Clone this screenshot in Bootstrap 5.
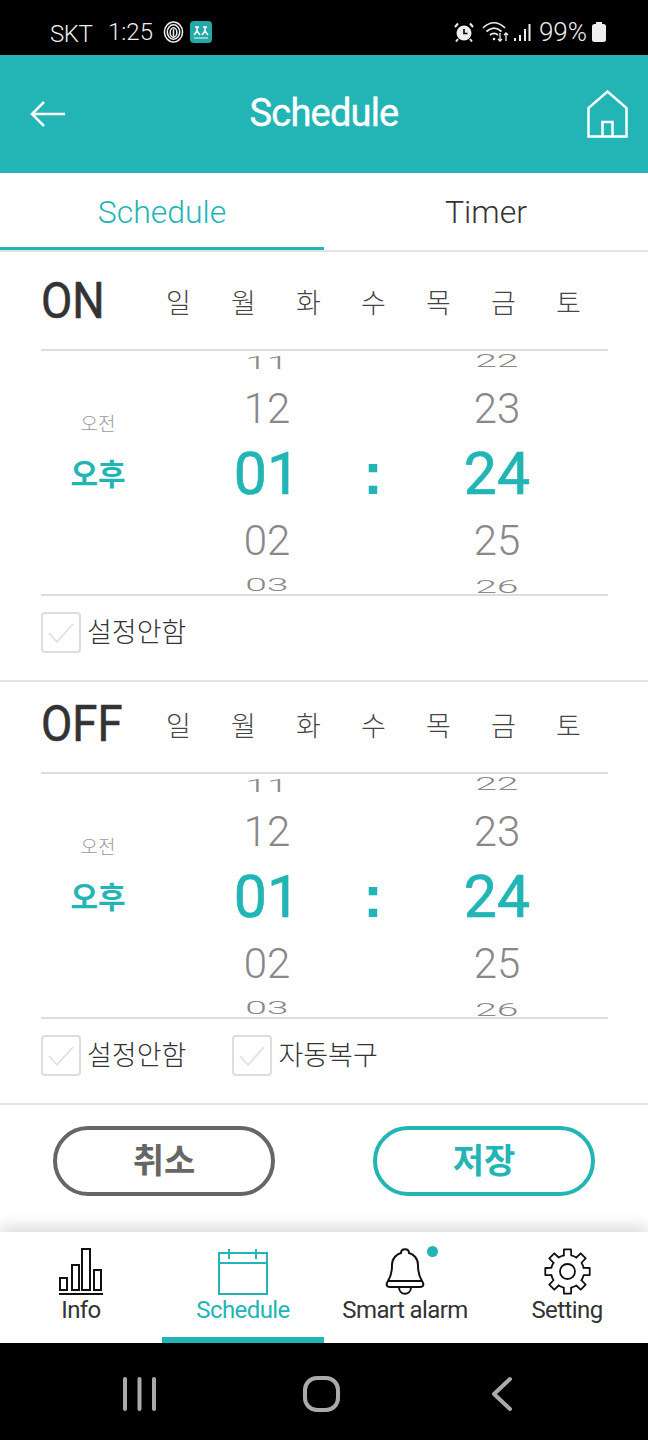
<!DOCTYPE html>
<html lang="ko"><head><meta charset="utf-8"><title>Schedule</title>
<link href="https://cdn.jsdelivr.net/npm/bootstrap@5.3.0/dist/css/bootstrap.min.css" rel="stylesheet">
<style>
html,body{height:1440px;overflow:hidden}
body{width:648px;font-family:Roboto,"Noto Sans CJK KR",sans-serif;color:#333;background:#fff}
.kr{font-family:"Noto Sans CJK KR",sans-serif}
.sbar{height:55px;background:#000;color:#eee;padding:8px 42px 0 50px}
.sbar-txt{font-size:24px;font-weight:300;line-height:1}
.skt{margin-top:4px;margin-right:16px;width:42px;letter-spacing:-.5px}
.clock{margin-right:11px;width:44px;letter-spacing:0}
.pct{font-size:26px;margin-left:8px;margin-right:5px}
.app-ic{margin-left:6px}
.app-head{height:118px;background:#23b5b5;color:#fff;padding:0 20px 0 30px}
.app-title{font-size:38px;font-weight:400;letter-spacing:-.8px;line-height:1;margin-right:5px;margin-top:-2px;-webkit-text-stroke:.4px #fff}
.tabbar{height:79px;border-bottom:2px solid #e2e2e2}
.tab-item{width:324px;height:77px;font-size:32px;font-weight:300;line-height:78px;text-align:center;color:#333}
.tab-on{color:#23b5b5;border-bottom:3px solid #23b5b5}
.sched-sec{padding:0 40px 0 41px}
.sec-on{padding-top:8px;height:430px}
.sec-off{padding-top:1px;height:423px}
.sec-rule{border-bottom:2px solid #e2e2e2}
.head-row{height:91px;padding-bottom:7px;border-bottom:2px solid #ddd}
.onoff{font-size:50px;font-weight:400;line-height:1;width:96px;margin-top:-1px;transform:scaleX(.91);transform-origin:left center;color:#333;-webkit-text-stroke:.6px #333}
.days{width:455px;margin-right:7px}
.day-i{width:65px;text-align:center;font-size:27px;font-weight:300;color:#444;line-height:1}
.picker{height:245px;border-bottom:2px solid #ddd}
.col-ap{width:114px;flex:none}
.col-h{width:212px;margin-left:6px;flex:none}
.col-c{width:0;flex:none}
.col-m{width:248px;flex:none}
.cell{display:flex;align-items:center;justify-content:center;color:#888;line-height:1}
.c1{height:25px;padding-bottom:3px}
.col-m .c1{padding-bottom:7px}
.c2{height:66px;font-size:42px;font-weight:300}
.c3{height:62px;font-size:59px;font-weight:400;color:#23b5b5;-webkit-text-stroke:.7px #23b5b5}
.c4{height:74px;font-size:42px;font-weight:300}
.c5{height:11px}
.col-m .c5{padding-top:4px}
.squash{display:inline-block;font-weight:300;font-size:34px;line-height:20px;transform:scaleY(.55) scaleX(1.15)}
.ap1{height:46px;font-size:19px;color:#999;font-weight:300}
.ap2{height:50px;font-size:30px;font-weight:700;color:#23b5b5;margin-top:2px}
.colon{width:20px;margin:0 -10px -2px;font-family:"Liberation Sans",sans-serif;font-size:60px;font-weight:700;color:#23b5b5;line-height:1;text-align:center}
.chk-row{height:41px;margin-top:16px}
.chk-box{width:40px;height:41px;border:2px solid #ddd;border-radius:4px;flex:none}
.chk-lbl{font-size:27px;font-weight:300;margin-left:6px;line-height:1;margin-bottom:5px;color:#333}
.chk-gap{margin-left:46px}
.btn-wrap{padding:21px 53px 0;height:127px}
.pill{width:222px;height:70px;border-radius:35px;font-size:34px;font-weight:700;line-height:1;background:#fff;padding:0 0 4px}
.pill-gray{border:4px solid #666;color:#666}
.pill-teal{border:4px solid #23b5b5;color:#23b5b5}
.botnav{height:111px;background:#fff;box-shadow:0 -6px 14px rgba(0,0,0,.14);z-index:1}
.nav-i{width:162px;height:111px;padding-top:16px;color:#333;font-size:24px;letter-spacing:-.6px;line-height:1}
.nav-i svg{display:block}
.nav-on{color:#23b5b5;border-bottom:6px solid #23b5b5}
.nav-lbl{margin-top:3px}
.dot-wrap{position:relative}
.bell-dot{position:absolute;width:11px;height:11px;border-radius:50%;background:#23b5b5;top:-2px;left:44px}
.sysbar{height:97px;background:#000}
</style></head><body>
<div class="sbar d-flex align-items-center">
  <span class="sbar-txt skt">SKT</span>
  <span class="sbar-txt clock">1:25</span>
  <svg width="21" height="24" viewBox="0 0 22 24" fill="none" stroke="#eee" stroke-width="1.6"><ellipse cx="11" cy="12" rx="9.5" ry="10.5"/><ellipse cx="11" cy="12" rx="6.5" ry="7.5"/><ellipse cx="11" cy="12.5" rx="3.5" ry="5"/><path d="M11 9v8"/></svg>
  <svg width="22" height="22" viewBox="0 0 22 22" class="app-ic"><rect width="22" height="22" rx="4" fill="#23a9a9"/><path d="M5 6h4M13 6h4M7 6v4M15 6v4M4 14l3-4 3 4M12 14l3-4 3 4" stroke="#fff" stroke-width="1.6" fill="none"/><path d="M4 17h14" stroke="#cfeeee" stroke-width="1.2"/></svg>
  <div class="flex-grow-1"></div>
  <svg width="20" height="20" viewBox="0 0 20 20" class="me-2"><circle cx="10" cy="11" r="7.5" fill="#eee"/><path d="M10 7v4.500h3.500" stroke="#000" stroke-width="1.6" fill="none"/><path d="M1 5l3-3.500M19 5l-3-3.500M4 17l-2 2.500M16 17l2 2.500" stroke="#eee" stroke-width="2"/></svg>
  <svg width="27" height="22" viewBox="0 0 27 22" fill="none" stroke="#eee" stroke-width="1.700"><path d="M1 7c7-7 15-7 22 0M4.500 10.500c5-4.500 10-4.500 15 0M8 14c3-2.500 5-2.500 8 0"/><circle cx="12" cy="18" r="1.300" fill="#eee" stroke="none"/><path d="M18 12v8M16 18l2 2 2-2M24 20v-8M22 14l2-2 2 2" stroke-width="1.300"/></svg>
  <svg width="18" height="20" viewBox="0 0 18 20" fill="#eee" class="ms-1"><rect x="1" y="16" width="2" height="3"/><rect x="6" y="13" width="2" height="6"/><rect x="11" y="7" width="2" height="12"/><rect x="15.500" y="2" width="2" height="17"/></svg>
  <span class="sbar-txt pct">99%</span>
  <svg width="14" height="20" viewBox="0 0 14 20" fill="#eee"><rect x="4" y="0" width="6" height="3"/><rect y="2" width="14" height="18" rx="2.500"/></svg>
</div>
<header class="app-head d-flex align-items-center justify-content-between">
  <svg width="36" height="28" viewBox="0 0 36 28" fill="none" stroke="#fff" stroke-width="2.500"><path d="M35 14H2M14 2L2 14l12 12"/></svg>
  <span class="app-title">Schedule</span>
  <svg width="41" height="48" viewBox="0 0 41 48" fill="none" stroke="#fff" stroke-width="2.500"><path d="M1.500 46.500V18L20.500 1.500 39.500 18v28.500zM15.500 46.500V32h10v14.500"/></svg>
</header>
<nav class="tabbar d-flex">
  <div class="tab-item tab-on">Schedule</div>
  <div class="tab-item">Timer</div>
</nav>
<section class="sched-sec sec-on sec-rule">
  <div class="head-row d-flex align-items-center justify-content-between">
    <div class="onoff">ON</div>
    <div class="days d-flex kr"><span class="day-i">일</span><span class="day-i">월</span><span class="day-i">화</span><span class="day-i">수</span><span class="day-i">목</span><span class="day-i">금</span><span class="day-i">토</span></div>
  </div>
  <div class="picker d-flex">
    <div class="col-ap kr"><div class="cell ap1 mt-5">오전</div><div class="cell ap2">오후</div></div>
    <div class="col-h"><div class="cell c1"><span class="squash">11</span></div><div class="cell c2">12</div><div class="cell c3">01</div><div class="cell c4">02</div><div class="cell c5"><span class="squash">03</span></div></div>
    <div class="col-c d-flex align-items-center justify-content-center"><div class="colon">:</div></div>
    <div class="col-m"><div class="cell c1"><span class="squash">22</span></div><div class="cell c2">23</div><div class="cell c3">24</div><div class="cell c4">25</div><div class="cell c5"><span class="squash">26</span></div></div>
  </div>
  <div class="chk-row d-flex align-items-center kr">
    <div class="chk-box d-flex align-items-center justify-content-center"><svg width="26" height="20" viewBox="0 0 26 20" fill="none" stroke="#ddd" stroke-width="1.500"><path d="M1 10l8 9L25 1"/></svg></div><span class="chk-lbl">설정안함</span>
  </div>
</section>
<section class="sched-sec sec-off sec-rule">
  <div class="head-row d-flex align-items-center justify-content-between">
    <div class="onoff">OFF</div>
    <div class="days d-flex kr"><span class="day-i">일</span><span class="day-i">월</span><span class="day-i">화</span><span class="day-i">수</span><span class="day-i">목</span><span class="day-i">금</span><span class="day-i">토</span></div>
  </div>
  <div class="picker d-flex">
    <div class="col-ap kr"><div class="cell ap1 mt-5">오전</div><div class="cell ap2">오후</div></div>
    <div class="col-h"><div class="cell c1"><span class="squash">11</span></div><div class="cell c2">12</div><div class="cell c3">01</div><div class="cell c4">02</div><div class="cell c5"><span class="squash">03</span></div></div>
    <div class="col-c d-flex align-items-center justify-content-center"><div class="colon">:</div></div>
    <div class="col-m"><div class="cell c1"><span class="squash">22</span></div><div class="cell c2">23</div><div class="cell c3">24</div><div class="cell c4">25</div><div class="cell c5"><span class="squash">26</span></div></div>
  </div>
  <div class="chk-row d-flex align-items-center kr">
    <div class="chk-box d-flex align-items-center justify-content-center"><svg width="26" height="20" viewBox="0 0 26 20" fill="none" stroke="#ddd" stroke-width="1.500"><path d="M1 10l8 9L25 1"/></svg></div><span class="chk-lbl">설정안함</span>
    <div class="chk-box chk-gap d-flex align-items-center justify-content-center"><svg width="26" height="20" viewBox="0 0 26 20" fill="none" stroke="#ddd" stroke-width="1.500"><path d="M1 10l8 9L25 1"/></svg></div><span class="chk-lbl">자동복구</span>
  </div>
</section>
<div class="btn-wrap d-flex justify-content-between align-items-start kr">
  <button type="button" class="btn pill pill-gray">취소</button>
  <button type="button" class="btn pill pill-teal">저장</button>
</div>
<nav class="botnav d-flex position-relative">
  <div class="nav-i d-flex flex-column align-items-center">
    <svg width="44" height="47" viewBox="0 0 44 47" fill="none" stroke="#111" stroke-width="2"><rect x="1" y="30" width="7" height="12"/><rect x="13" y="17" width="7" height="25"/><rect x="23" y="1" width="8" height="41"/><rect x="35" y="22" width="7" height="20"/><path d="M0 46h44"/></svg>
    <span class="nav-lbl">Info</span>
  </div>
  <div class="nav-i nav-on d-flex flex-column align-items-center">
    <svg width="50" height="47" viewBox="0 0 50 47" fill="none" stroke="#23b5b5" stroke-width="2"><rect x="1" y="5" width="48" height="41"/><path d="M1 15h48M11 1v10M38 1v10"/></svg>
    <span class="nav-lbl">Schedule</span>
  </div>
  <div class="nav-i d-flex flex-column align-items-center">
    <div class="dot-wrap">
      <svg width="44" height="47" viewBox="0 0 44 47" fill="none" stroke="#111" stroke-width="2"><path d="M5 33c4-6 4-11 4-16 0-7 5-11 9-12 0-5 8-5 8 0 4 1 9 5 9 12 0 5 0 10 4 16 2 3 2 6-2 6H7c-4 0-4-3-2-6zM5.500 33h33M16 39c0 9 12 9 12 0"/></svg>
      <span class="bell-dot"></span>
    </div>
    <span class="nav-lbl">Smart alarm</span>
  </div>
  <div class="nav-i d-flex flex-column align-items-center">
    <svg width="47" height="47" viewBox="0 0 47 47" fill="none" stroke="#111" stroke-width="1.800" stroke-linejoin="round" stroke-linecap="round"><g id="gear-t"><path d="M19.790 7.420L19.980 1.280H27.020L27.210 7.420A16.500 16.500 0 0 1 32.240 9.510"/></g><path transform="rotate(45 23.500 23.500)" d="M19.790 7.420L19.980 1.280H27.020L27.210 7.420A16.500 16.500 0 0 1 32.240 9.510"/><path transform="rotate(90 23.500 23.500)" d="M19.790 7.420L19.980 1.280H27.020L27.210 7.420A16.500 16.500 0 0 1 32.240 9.510"/><path transform="rotate(135 23.500 23.500)" d="M19.790 7.420L19.980 1.280H27.020L27.210 7.420A16.500 16.500 0 0 1 32.240 9.510"/><path transform="rotate(180 23.500 23.500)" d="M19.790 7.420L19.980 1.280H27.020L27.210 7.420A16.500 16.500 0 0 1 32.240 9.510"/><path transform="rotate(225 23.500 23.500)" d="M19.790 7.420L19.980 1.280H27.020L27.210 7.420A16.500 16.500 0 0 1 32.240 9.510"/><path transform="rotate(270 23.500 23.500)" d="M19.790 7.420L19.980 1.280H27.020L27.210 7.420A16.500 16.500 0 0 1 32.240 9.510"/><path transform="rotate(315 23.500 23.500)" d="M19.790 7.420L19.980 1.280H27.020L27.210 7.420A16.500 16.500 0 0 1 32.240 9.510"/><circle cx="23.500" cy="23.500" r="7.500"/></svg>
    <span class="nav-lbl">Setting</span>
  </div>
</nav>
<div class="sysbar d-flex align-items-center position-relative">
  <svg width="648" height="97" viewBox="0 0 648 97" fill="none" stroke="#aaa" class="d-block"><path d="M125 36v30M139.500 36v30M154 36v30" stroke-width="4" stroke-linecap="round"/><rect x="305" y="35" width="33" height="32" rx="12" stroke-width="4"/><path d="M510 36l-16 15 16 15" stroke-width="4" stroke-linecap="round" stroke-linejoin="round"/></svg>
</div>
</body></html>
